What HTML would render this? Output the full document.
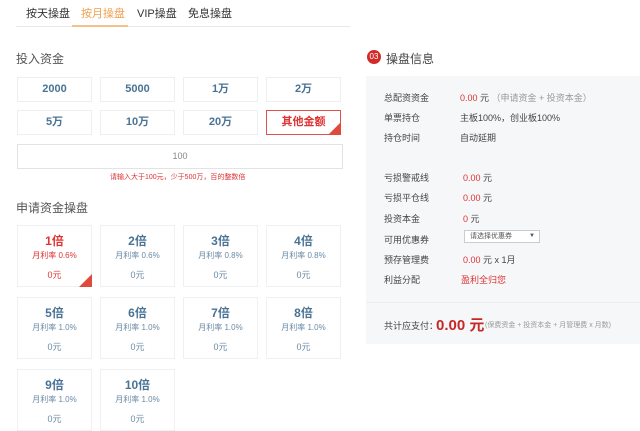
<!DOCTYPE html><html><head><meta charset="utf-8"><style>
*{margin:0;padding:0;box-sizing:border-box}
body{width:640px;height:416px;overflow:hidden;background:#fff;font-family:"Liberation Sans","Noto Sans CJK SC",sans-serif;color:#333;position:relative}
.a{position:absolute;white-space:nowrap}
.tab{font-size:11px;top:5px}
.btn{position:absolute;width:75px;height:25px;border:1px solid #eceff2;text-align:center;line-height:23px;font-size:11px;font-weight:bold;color:#4a7395}
.sel{border-color:#e05050;color:#d33}
.corner{position:absolute;right:-1px;bottom:-1px;width:0;height:0;border-left:13px solid transparent;border-bottom:13px solid #e04a3c}
.card{position:absolute;width:75px;height:62px;border:1px solid #eef0f2;text-align:center;color:#4a7395}
.card b{display:block;font-size:12px;margin-top:6px;height:16px}
.card i{display:block;font-style:normal;font-size:8px;margin-top:2px;color:#6a8aa5}
.card s{display:block;text-decoration:none;font-size:9px;margin-top:7px;color:#6a8aa5}
.card.sel b,.card.sel i,.card.sel s{color:#d33}
.lb{font-size:9px;color:#444;left:384px}
.v{font-size:9px;left:460px;color:#444}
.r{color:#d33}
</style></head><body>
<div class="a tab" style="left:26px">按天操盘</div>
<div class="a tab" style="left:81px;color:#f0a050">按月操盘</div>
<div class="a tab" style="left:137px">VIP操盘</div>
<div class="a tab" style="left:188px">免息操盘</div>
<div class="a" style="left:16px;top:26px;width:334px;height:1px;background:#e8e8e8"></div>
<div class="a" style="left:72px;top:25px;width:56px;height:2px;background:#f5c08a"></div>
<div class="a" style="left:16px;top:50px;font-size:12px;color:#555">投入资金</div>
<div class="btn" style="left:17px;top:77px">2000</div>
<div class="btn" style="left:100px;top:77px">5000</div>
<div class="btn" style="left:183px;top:77px">1万</div>
<div class="btn" style="left:266px;top:77px">2万</div>
<div class="btn" style="left:17px;top:110px">5万</div>
<div class="btn" style="left:100px;top:110px">10万</div>
<div class="btn" style="left:183px;top:110px">20万</div>
<div class="btn sel" style="left:266px;top:110px">其他金额<div class="corner"></div></div>
<div class="a" style="left:17px;top:144px;width:326px;height:25px;border:1px solid #e3e3e3;text-align:center;line-height:23px;font-size:9px;color:#888">100</div>
<div class="a" style="left:110px;top:172px;font-size:7px;color:#d33">请输入大于100元，少于500万，百的整数倍</div>
<div class="a" style="left:16px;top:199px;font-size:12px;color:#555">申请资金操盘</div>
<div class="card sel" style="left:17px;top:225px"><b>1倍</b><i>月利率 0.6%</i><s>0元</s><div class="corner"></div></div>
<div class="card" style="left:100px;top:225px"><b>2倍</b><i>月利率 0.6%</i><s>0元</s></div>
<div class="card" style="left:183px;top:225px"><b>3倍</b><i>月利率 0.8%</i><s>0元</s></div>
<div class="card" style="left:266px;top:225px"><b>4倍</b><i>月利率 0.8%</i><s>0元</s></div>
<div class="card" style="left:17px;top:297px"><b>5倍</b><i>月利率 1.0%</i><s>0元</s></div>
<div class="card" style="left:100px;top:297px"><b>6倍</b><i>月利率 1.0%</i><s>0元</s></div>
<div class="card" style="left:183px;top:297px"><b>7倍</b><i>月利率 1.0%</i><s>0元</s></div>
<div class="card" style="left:266px;top:297px"><b>8倍</b><i>月利率 1.0%</i><s>0元</s></div>
<div class="card" style="left:17px;top:369px"><b>9倍</b><i>月利率 1.0%</i><s>0元</s></div>
<div class="card" style="left:100px;top:369px"><b>10倍</b><i>月利率 1.0%</i><s>0元</s></div>

<div class="a" style="left:367px;top:50px;width:14px;height:14px;border-radius:50%;background:#d32a2a;color:#fff;font-size:8px;text-align:center;line-height:14px">03</div>
<div class="a" style="left:386px;top:50px;font-size:12px;color:#444">操盘信息</div>
<div class="a" style="left:366px;top:76px;width:274px;height:268px;background:#f6f7f9"></div>
<div class="a" style="left:366px;top:302px;width:274px;height:1px;background:#eceef0"></div>
<div class="a lb" style="top:91px">总配资资金</div><div class="a v" style="top:91px"><span class="r">0.00</span> 元 <span style="color:#999">（申请资金 + 投资本金）</span></div>
<div class="a lb" style="top:111px">单票持仓</div><div class="a v" style="top:111px">主板100%，创业板100%</div>
<div class="a lb" style="top:131px">持仓时间</div><div class="a v" style="top:131px">自动延期</div>
<div class="a lb" style="top:171px">亏损警戒线</div><div class="a v" style="top:171px;left:463px"><span class="r">0.00</span> 元</div>
<div class="a lb" style="top:191px">亏损平仓线</div><div class="a v" style="top:191px;left:463px"><span class="r">0.00</span> 元</div>
<div class="a lb" style="top:212px">投资本金</div><div class="a v" style="top:212px;left:463px"><span class="r">0</span> 元</div>
<div class="a lb" style="top:233px">可用优惠券</div>
<div class="a" style="left:464px;top:230px;width:76px;height:13px;background:#fff;border:1px solid #ccc;font-size:7px;color:#555;line-height:11px;padding-left:5px">请选择优惠券<span style="position:absolute;right:4px;font-size:6px">▼</span></div>
<div class="a lb" style="top:253px">预存管理费</div><div class="a v" style="top:253px;left:463px"><span class="r">0.00</span> 元 x 1月</div>
<div class="a lb" style="top:273px">利益分配</div><div class="a v r" style="top:273px;left:461px">盈利全归您</div>
<div class="a" style="left:384px;top:319px;font-size:9px;color:#444">共计应支付：</div>
<div class="a" style="left:436px;top:314px;font-size:15px;font-weight:bold;color:#c62828">0.00 元</div>
<div class="a" style="left:485px;top:320px;font-size:7px;color:#999">(保费资金 + 投资本金 + 月管理费 x 月数)</div>
</body></html>
